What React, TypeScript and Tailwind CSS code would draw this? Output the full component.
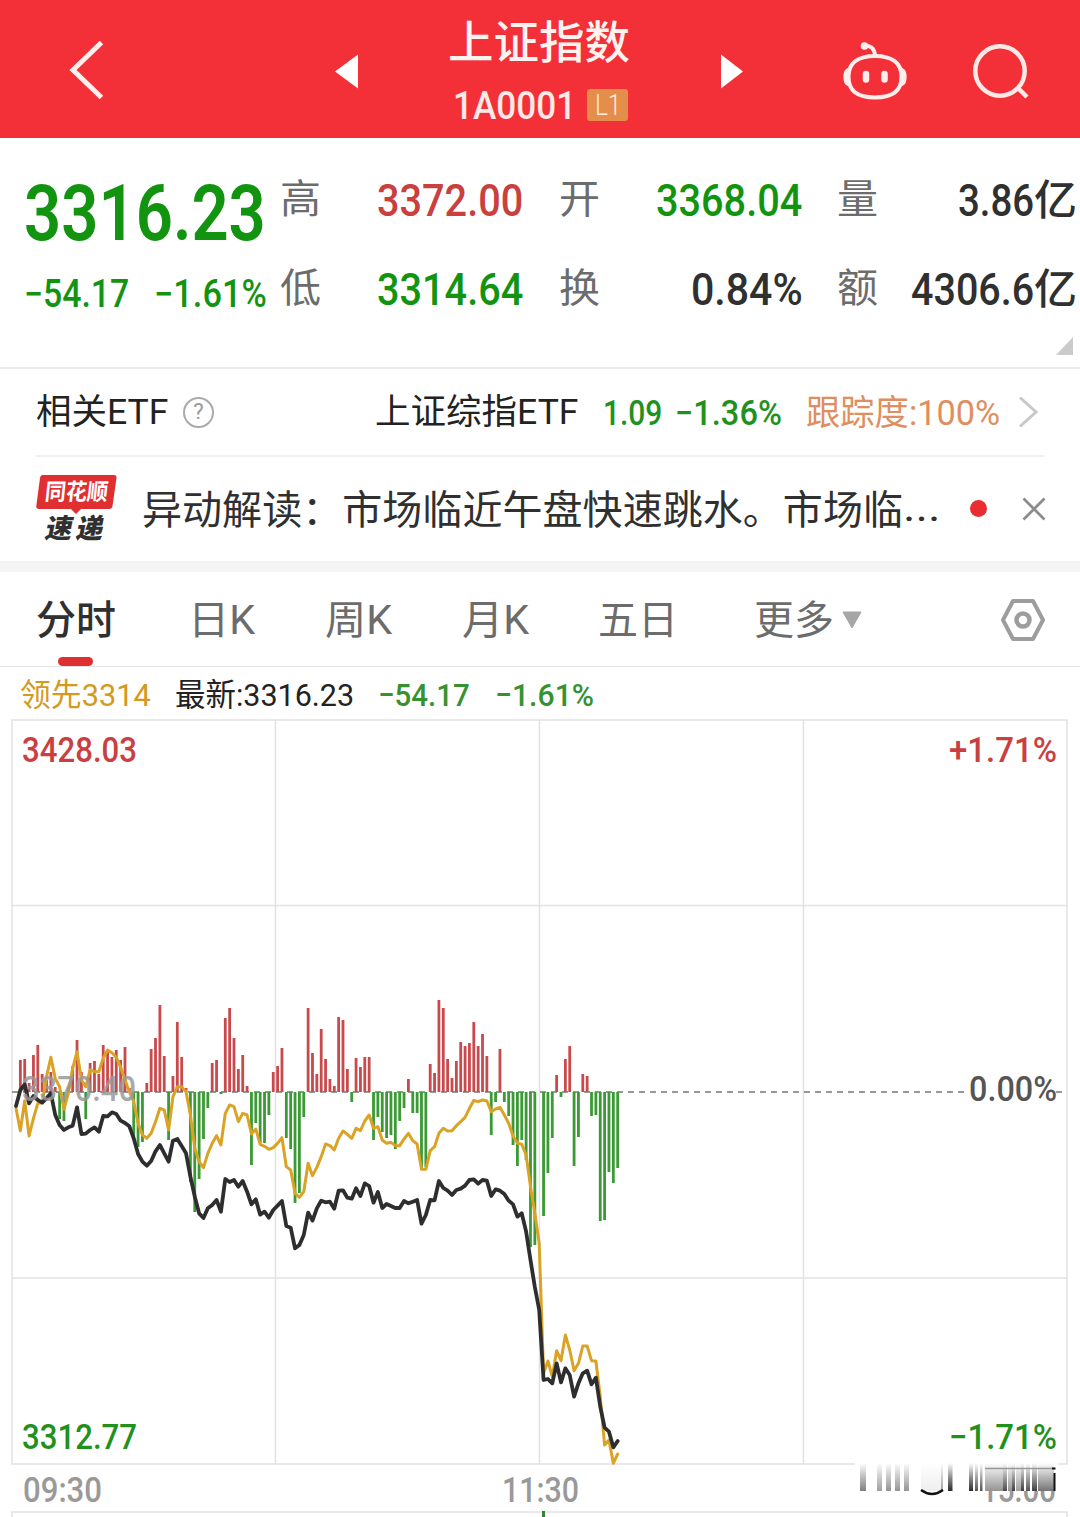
import { useLayoutEffect, useRef } from 'react';
import clsx from 'clsx';

const FONT = "font-['Roboto','Noto_Sans_CJK_SC',sans-serif]";

// Text squeezed horizontally to the width of its box, like the narrow DIN digits of the app.
const Fit = ({ className, children }: { className: string; children: string }) => {
  const box = useRef<HTMLSpanElement>(null);
  const inner = useRef<HTMLSpanElement>(null);

  useLayoutEffect(() => {
    if (!box.current || !inner.current) return;
    const k = box.current.clientWidth / inner.current.offsetWidth;
    inner.current.style.transform = `scaleX(${k})`;
  }, [children]);

  return (
    <span ref={box} className={clsx('block shrink-0 whitespace-nowrap', className)}>
      <span ref={inner} className="inline-block origin-left">
        {children}
      </span>
    </span>
  );
};

const Header = () => (
  <header className="flex h-[138px] items-start bg-[#f32f38] text-white">
    <svg className="ml-[66px] mt-[36px] h-[68px] w-[42px]" viewBox="0 0 42 68" fill="none">
      <path d="M35.5 6.5 L7 34 L35.5 61.5" stroke="#fff0ee" strokeWidth="5" />
    </svg>
    <svg className="ml-[226px] mt-[54px] h-[36px] w-[25px]" viewBox="0 0 25 36">
      <path d="M1 17.5 L24 0.5 V34.5 Z" fill="#fff" />
    </svg>
    <div className="ml-[89px] w-[184px]">
      <Fit className="mt-[14px] w-[182px] text-[45px] font-medium leading-[60px] text-[#fff3f0]">上证指数</Fit>
      <div className="mt-[15px] flex h-[33px]">
        <Fit className="ml-[5px] mt-px w-[123px] text-[38px] font-medium leading-[33px] text-[#ffe9e7]">1A0001</Fit>
        <div className="ml-[11px] flex h-[32px] w-[41px] justify-center rounded-[3px] bg-[#e58d4b]">
          <Fit className="w-[26px] text-[29px] font-light leading-[33px] text-[#ffeedd]">L1</Fit>
        </div>
      </div>
    </div>
    <svg className="ml-[88px] mt-[54px] h-[36px] w-[25px]" viewBox="0 0 25 36">
      <path d="M23 17.5 L1 0.5 V34.5 Z" fill="#fff" />
    </svg>
    <svg className="ml-[96px] mt-[38px] h-[66px] w-[68px]" viewBox="0 0 68 66" fill="none" stroke="#ffefec">
      <path d="M22.5 8 C28 7 33 9 34 17" strokeWidth="4" />
      <circle cx="23.5" cy="8" r="3.8" fill="#ffefec" stroke="none" />
      <path
        d="M34 18 C51 18 60.500 25 60.500 38.500 C60.500 53 52 59.500 34 59.500 C16 59.500 7.500 53 7.500 38.500 C7.500 25 17 18 34 18 Z"
        strokeWidth="4"
      />
      <path d="M6.500 31 C2 33 2 45 6.500 47 Z M61.500 31 C66 33 66 45 61.500 47 Z" fill="#ffefec" strokeWidth="1.500" />
      <path d="M25 36 V41.500 M43.500 36 V41.500" strokeWidth="6.500" strokeLinecap="round" />
    </svg>
    <svg className="ml-[62px] mt-[40px] h-[62px] w-[62px]" viewBox="0 0 62 62" fill="none" stroke="#ffe9e7">
      <circle cx="29" cy="31" r="24.700" strokeWidth="4.500" />
      <path d="M46.500 47.500 L56 57" strokeWidth="4.500" />
    </svg>
  </header>
);

const LABEL = 'text-[40px] font-normal leading-[42px] text-[#6c6c6c]';
const VALUE = 'pt-px text-[44px] font-medium leading-[43px]';
const UNIT = 'w-[43px] text-[42px] font-medium leading-[44px] text-[#303030]';

const Quote = () => (
  <section className="flex h-[231px] items-start border-b-2 border-[#ebebeb]">
    <div className="ml-[24px] w-[244px] text-[#129410]">
      <Fit className="mt-[36px] w-[242px] text-[77px] font-semibold leading-[81px]">3316.23</Fit>
      <div className="mt-[19px] flex">
        <Fit className="w-[105px] text-[38px] font-medium leading-[40px]">−54.17</Fit>
        <Fit className="ml-[25px] w-[113px] text-[38px] font-medium leading-[40px]">−1.61%</Fit>
      </div>
    </div>
    <div className="mt-[41px] flex flex-col gap-[45px] pl-[12px]">
      <div className="flex">
        <Fit className={clsx(LABEL, 'w-[41px]')}>高</Fit>
        <Fit className={clsx(VALUE, 'ml-[56px] w-[146px] text-[#c9403f]')}>3372.00</Fit>
        <Fit className={clsx(LABEL, 'ml-[36px] w-[41px]')}>开</Fit>
        <Fit className={clsx(VALUE, 'ml-[56px] w-[146px] text-[#129410]')}>3368.04</Fit>
        <Fit className={clsx(LABEL, 'ml-[35px] w-[41px]')}>量</Fit>
        <Fit className={clsx(VALUE, 'ml-[80px] w-[76px] text-[#303030]')}>3.86</Fit>
        <Fit className={UNIT}>亿</Fit>
      </div>
      <div className="flex">
        <Fit className={clsx(LABEL, 'w-[41px]')}>低</Fit>
        <Fit className={clsx(VALUE, 'ml-[56px] w-[146px] text-[#129410]')}>3314.64</Fit>
        <Fit className={clsx(LABEL, 'ml-[36px] w-[41px]')}>换</Fit>
        <Fit className={clsx(VALUE, 'ml-[91px] w-[112px] text-[#303030]')}>0.84%</Fit>
        <Fit className={clsx(LABEL, 'ml-[34px] w-[41px]')}>额</Fit>
        <Fit className={clsx(VALUE, 'ml-[33px] w-[123px] text-[#303030]')}>4306.6</Fit>
        <Fit className={UNIT}>亿</Fit>
      </div>
      <svg className="-mt-[20px] ml-[776px] h-[18px] w-[18px]" viewBox="0 0 18 18">
        <path d="M17 0 V18 H0 Z" fill="#cbcbcb" />
      </svg>
    </div>
  </section>
);

const EtfRow = () => (
  <section className="mx-[36px] flex h-[88px] items-center border-b-2 border-[#f0f0f0] text-[35px] font-medium leading-[40px]">
    <Fit className="mt-[2px] w-[132px] font-normal text-[#222]">相关ETF</Fit>
    <div className="ml-[15px] flex size-[31px] items-center justify-center rounded-full border-2 border-[#aaa] text-[22px] font-normal text-[#999]">
      ?
    </div>
    <Fit className="ml-[161px] mt-[2px] w-[203px] font-normal text-[#222]">上证综指ETF</Fit>
    <Fit className="ml-[25px] mt-[4px] w-[59px] text-[#1f911c]">1.09</Fit>
    <Fit className="ml-[13px] mt-[4px] w-[107px] text-[#1f911c]">−1.36%</Fit>
    <Fit className="ml-[24px] mt-[4px] w-[194px] font-normal text-[#e08e60]">跟踪度:100%</Fit>
    <svg className="ml-[16px] h-[36px] w-[24px]" viewBox="0 0 24 36" fill="none">
      <path d="M4 3.500 L20 18 L4 32.500" stroke="#c8c8c8" strokeWidth="3" />
    </svg>
  </section>
);

const NewsRow = () => (
  <section className="flex h-[104px] items-start pl-[36px]">
    <div className="mt-[18px] w-[82px]">
      <div className="relative flex h-[34px] w-[81px] items-center justify-center">
        <svg className="absolute left-0 top-0 h-[40px] w-[81px]" viewBox="0 0 81 40">
          <path
            d="M7 0 H78 Q81 0 80.500 3 L76.500 31 Q76 34 73 34 H45 L40 39 L35 34 H3 Q0 34 0.300 31 L4 3 Q4.500 0 7 0 Z"
            fill="#df2f31"
          />
        </svg>
        <Fit className="relative mt-[2px] w-[63px] -skew-x-6 text-[23px] font-bold leading-[34px] text-white">同花顺</Fit>
      </div>
      <div className="ml-[10px] mt-[5px] flex -skew-x-12 gap-[4px]">
        <Fit className="w-[27px] text-[27px] font-black leading-[30px] text-[#303030]">速</Fit>
        <Fit className="w-[27px] text-[27px] font-black leading-[30px] text-[#303030]">递</Fit>
      </div>
    </div>
    <Fit className="ml-[24px] mt-[31px] w-[761px] text-[40px] leading-[46px] text-[#303030]">
      异动解读：市场临近午盘快速跳水。市场临
    </Fit>
    <Fit className="mt-[28px] w-[38px] text-[40px] leading-[46px] text-[#303030]">...</Fit>
    <div className="ml-[29px] mt-[43px] size-[17px] rounded-full bg-[#e92d30]" />
    <svg className="ml-[35px] mt-[40px] h-[24px] w-[24px]" viewBox="0 0 24 24">
      <path d="M1.500 1.500 L22.500 22.500 M22.500 1.500 L1.500 22.500" stroke="#8c8c8c" strokeWidth="2.800" />
    </svg>
  </section>
);

const TAB = 'mt-[3px] text-[40px] font-normal leading-[48px] text-[#6c6c6c]';

const Tabs = () => (
  <nav className="h-[95px] border-b border-[#e4e4e4] pt-[22px]">
    <div className="flex h-[63px] items-start">
      <Fit className="ml-[36px] mt-[3px] w-[80px] text-[40px] font-medium leading-[48px] text-[#303030]">分时</Fit>
      <Fit className={clsx(TAB, 'ml-[72px] w-[67px]')}>日K</Fit>
      <Fit className={clsx(TAB, 'ml-[70px] w-[67px]')}>周K</Fit>
      <Fit className={clsx(TAB, 'ml-[70px] w-[67px]')}>月K</Fit>
      <Fit className={clsx(TAB, 'ml-[69px] w-[80px]')}>五日</Fit>
      <Fit className={clsx(TAB, 'ml-[76px] w-[80px]')}>更多</Fit>
      <svg className="ml-[8px] mt-[17px] h-[18px] w-[20px]" viewBox="0 0 20 18">
        <path d="M1 1 H19 L10 17 Z" fill="#a6a6a6" stroke="#a6a6a6" strokeLinejoin="round" />
      </svg>
      <svg className="ml-[138px] mt-[4px] h-[44px] w-[46px]" viewBox="0 0 46 44" fill="none" stroke="#9d9d9d">
        <path d="M13 3 H33 L43 22 L33 41 H13 L3 22 Z" strokeWidth="4" strokeLinejoin="round" />
        <circle cx="23" cy="22" r="6.500" strokeWidth="4.500" />
      </svg>
    </div>
    <div className="ml-[58px] h-[9px] w-[35px] rounded-full bg-[#df3031]" />
  </nav>
);

const Legend = () => (
  <div className="flex h-[45px] items-start pt-[8px] text-[32px] font-normal leading-[40px]">
    <Fit className="ml-[20px] w-[131px] text-[#d49a20]">领先3314</Fit>
    <Fit className="ml-[24px] w-[179px] text-[#222]">最新:3316.23</Fit>
    <Fit className="ml-[24px] w-[92px] font-medium text-[#36922f]">−54.17</Fit>
    <Fit className="ml-[25px] w-[99px] font-medium text-[#36922f]">−1.61%</Fit>
  </div>
);

const ZERO = 1092;
const px = (i: number) => 16 + i * 4.36;

// One bar per minute: above the zero line when positive, below when negative.
const BARS = [
  0, 32, 33, 9, 37, 47, 18, 12, 20, 5, -27, -29, 5, 26, 52, 20, -27, 29, 31, 18, 47, 40, 35, 42, 32, 45, 4, -45, -55,
  -50, 9, 43, 54, 87, 36, -48, 16, 70, 35, 4, -90, -120, -87, -47, -16, 29, 32, -2, 74, 84, 54, 23, 37, 6, -73, -31,
  -51, -51, -23, 20, 26, 44, -46, -57, -111, -101, -25, 84, 39, 18, 63, 33, 13, 6, 75, 72, 23, -10, 34, 25, 35, 35,
  -48, -25, -40, -46, -43, -57, -29, -16, 13, -21, -21, -76, -75, 28, 19, 92, 84, 33, 14, 31, 50, 46, 49, 70, 46, 58,
  36, -43, -10, 43, -10, -24, -53, -74, -48, -68, -155, -153, 0, -124, -81, -46, 17, -5, 33, 46, -74, -45, 18, 16,
  -24, -23, -129, -128, -80, -91, -76,
];

const PRICE = [
  378, 330, 313, 370, 348, 360, 368, 355, 340, 405, 435, 450, 442, 437, 382, 462, 461, 450, 442, 455, 408, 409, 397,
  402, 422, 429, 439, 475, 522, 545, 557, 543, 514, 495, 520, 545, 482, 477, 498, 520, 590, 650, 700, 714, 685, 675,
  660, 695, 597, 606, 600, 620, 603, 635, 673, 658, 704, 695, 713, 690, 677, 663, 738, 743, 805, 795, 765, 698, 722,
  685, 662, 667, 665, 686, 632, 631, 653, 656, 625, 648, 610, 618, 668, 636, 684, 672, 678, 684, 684, 663, 670, 665,
  660, 731, 705, 660, 661, 603, 624, 632, 645, 630, 626, 617, 600, 598, 611, 600, 602, 648, 628, 632, 642, 662, 673,
  710, 700, 755, 840, 921, 990, 1200, 1197, 1210, 1150, 1207, 1165, 1185, 1250, 1210, 1180, 1172, 1213, 1193, 1280,
  1343, 1355, 1402, 1383,
];

const LEAD = [
  385, 452, 362, 468, 415, 370, 368, 290, 232, 295, 320, 388, 340, 265, 215, 300, 320, 270, 275, 275, 235, 210, 218,
  232, 262, 300, 335, 365, 430, 465, 475, 460, 425, 385, 390, 450, 350, 320, 320, 335, 405, 505, 545, 563, 520, 490,
  467, 495, 400, 375, 380, 425, 400, 405, 462, 447, 493, 499, 508, 503, 490, 473, 560, 570, 640, 652, 635, 550, 587,
  562, 530, 492, 497, 510, 475, 453, 463, 475, 445, 452, 423, 405, 445, 440, 480, 490, 487, 497, 497, 477, 460, 482,
  492, 568, 568, 512, 500, 460, 445, 453, 452, 437, 425, 412, 385, 361, 365, 360, 363, 395, 387, 382, 405, 430, 468,
  490, 493, 525, 620, 700, 790, 1180, 1143, 1190, 1112, 1142, 1065, 1110, 1172, 1150, 1098, 1098, 1142, 1143, 1250,
  1395, 1380, 1450, 1422,
];

const points = (values: number[]) => values.map((v, i) => `${px(i)},${980 + v / 3}`).join(' ');

// x, width and opacity of the streaks over the closing time
const STREAKS = [
  [860, 6, 0.6],
  [877, 5, 0.45],
  [886, 5, 0.5],
  [895, 5, 0.5],
  [904, 5, 0.5],
  [921, 20, 0.08],
  [941, 2, 0.45],
  [948, 4.5, 1],
  [969, 4, 1],
  [975, 3, 0.8],
  [980, 2.5, 0.8],
  [985, 18, 0.5],
  [1003, 4, 0.85],
  [1008, 4, 0.5],
  [1012, 3, 0.9],
  [1016, 5, 0.45],
  [1021, 3, 0.9],
  [1026, 4, 0.8],
  [1032, 5, 0.9],
  [1038, 16, 0.65],
];

const Chart = () => (
  <svg className={clsx('block h-[805px] w-[1080px] font-medium', FONT)} viewBox="0 712 1080 805" fontSize="35">
    <defs>
      <linearGradient id="streak" x1="0" y1="0" x2="0" y2="1">
        <stop offset="0" stopColor="#222" stopOpacity="0" />
        <stop offset="0.500" stopColor="#222" stopOpacity="0.500" />
        <stop offset="1" stopColor="#111" stopOpacity="0.900" />
      </linearGradient>
    </defs>
    <g fill="none" stroke="#e2e2e2" strokeWidth="1.500">
      <rect x="12" y="720" width="1055" height="744" />
      <path d="M12 905.500 H1067 M12 1278 H1067 M275.500 720 V1464 M539.500 720 V1464 M803.500 720 V1464" />
      <path d="M12 1517 V1512 H1067 V1517" />
    </g>
    <path d="M12 1092 H967 M1056 1092 H1062" stroke="#777" strokeWidth="1.500" strokeDasharray="6 5" />
    {BARS.map((v, i) => (
      <rect
        key={i}
        x={px(i) - 1.4}
        y={v > 0 ? ZERO - v : ZERO}
        width="2.800"
        height={Math.abs(v)}
        fill={v > 0 ? '#c94a4d' : '#3b9a35'}
      />
    ))}
    <g fill="none" strokeLinejoin="round" strokeLinecap="round">
      <polyline points={points(LEAD)} stroke="#daa325" strokeWidth="3" />
      <polyline points={points(PRICE)} stroke="#2e2e2e" strokeWidth="3.800" />
    </g>
    <text x="22" y="762" textLength="115" lengthAdjust="spacingAndGlyphs" fill="#c9403f">3428.03</text>
    <text x="949" y="762" textLength="108" lengthAdjust="spacingAndGlyphs" fill="#c9403f">+1.71%</text>
    <text x="22" y="1101" textLength="114" lengthAdjust="spacingAndGlyphs" fill="#999" fillOpacity="0.850">3370.40</text>
    <text x="969" y="1101" textLength="88" lengthAdjust="spacingAndGlyphs" fill="#555">0.00%</text>
    <text x="22" y="1449" textLength="115" lengthAdjust="spacingAndGlyphs" fill="#1f911c">3312.77</text>
    <text x="949" y="1449" textLength="108" lengthAdjust="spacingAndGlyphs" fill="#1f911c">−1.71%</text>
    <g fill="#999">
      <text x="23" y="1502" textLength="79" lengthAdjust="spacingAndGlyphs">09:30</text>
      <text x="502" y="1502" textLength="77" lengthAdjust="spacingAndGlyphs">11:30</text>
      <text x="981" y="1502" textLength="75" lengthAdjust="spacingAndGlyphs">15:00</text>
    </g>
    <rect x="855" y="1463" width="203" height="28" fill="#fff" />
    {STREAKS.map(([x, w, o]) => (
      <rect key={x} x={x} y="1463" width={w} height="28" fill="url(#streak)" fillOpacity={o} />
    ))}
    <path d="M921 1490 Q932 1498 943 1490" fill="none" stroke="#111" strokeWidth="2.500" />
    <path d="M985 1468.500 H1055" stroke="#999" strokeWidth="1.500" />
    <path d="M1052 1468.500 H1055.500 M1054.500 1473 V1491" stroke="#111" strokeWidth="2" />
    <path d="M543.500 1511 V1517" stroke="#2c8a34" strokeWidth="3" />
  </svg>
);

export default function App() {
  return (
    <div className={clsx('h-[1517px] w-[1080px] overflow-hidden bg-white', FONT)}>
      <Header />
      <Quote />
      <EtfRow />
      <NewsRow />
      <div className="h-[11px] bg-[#f4f4f4]" />
      <Tabs />
      <Legend />
      <Chart />
    </div>
  );
}
